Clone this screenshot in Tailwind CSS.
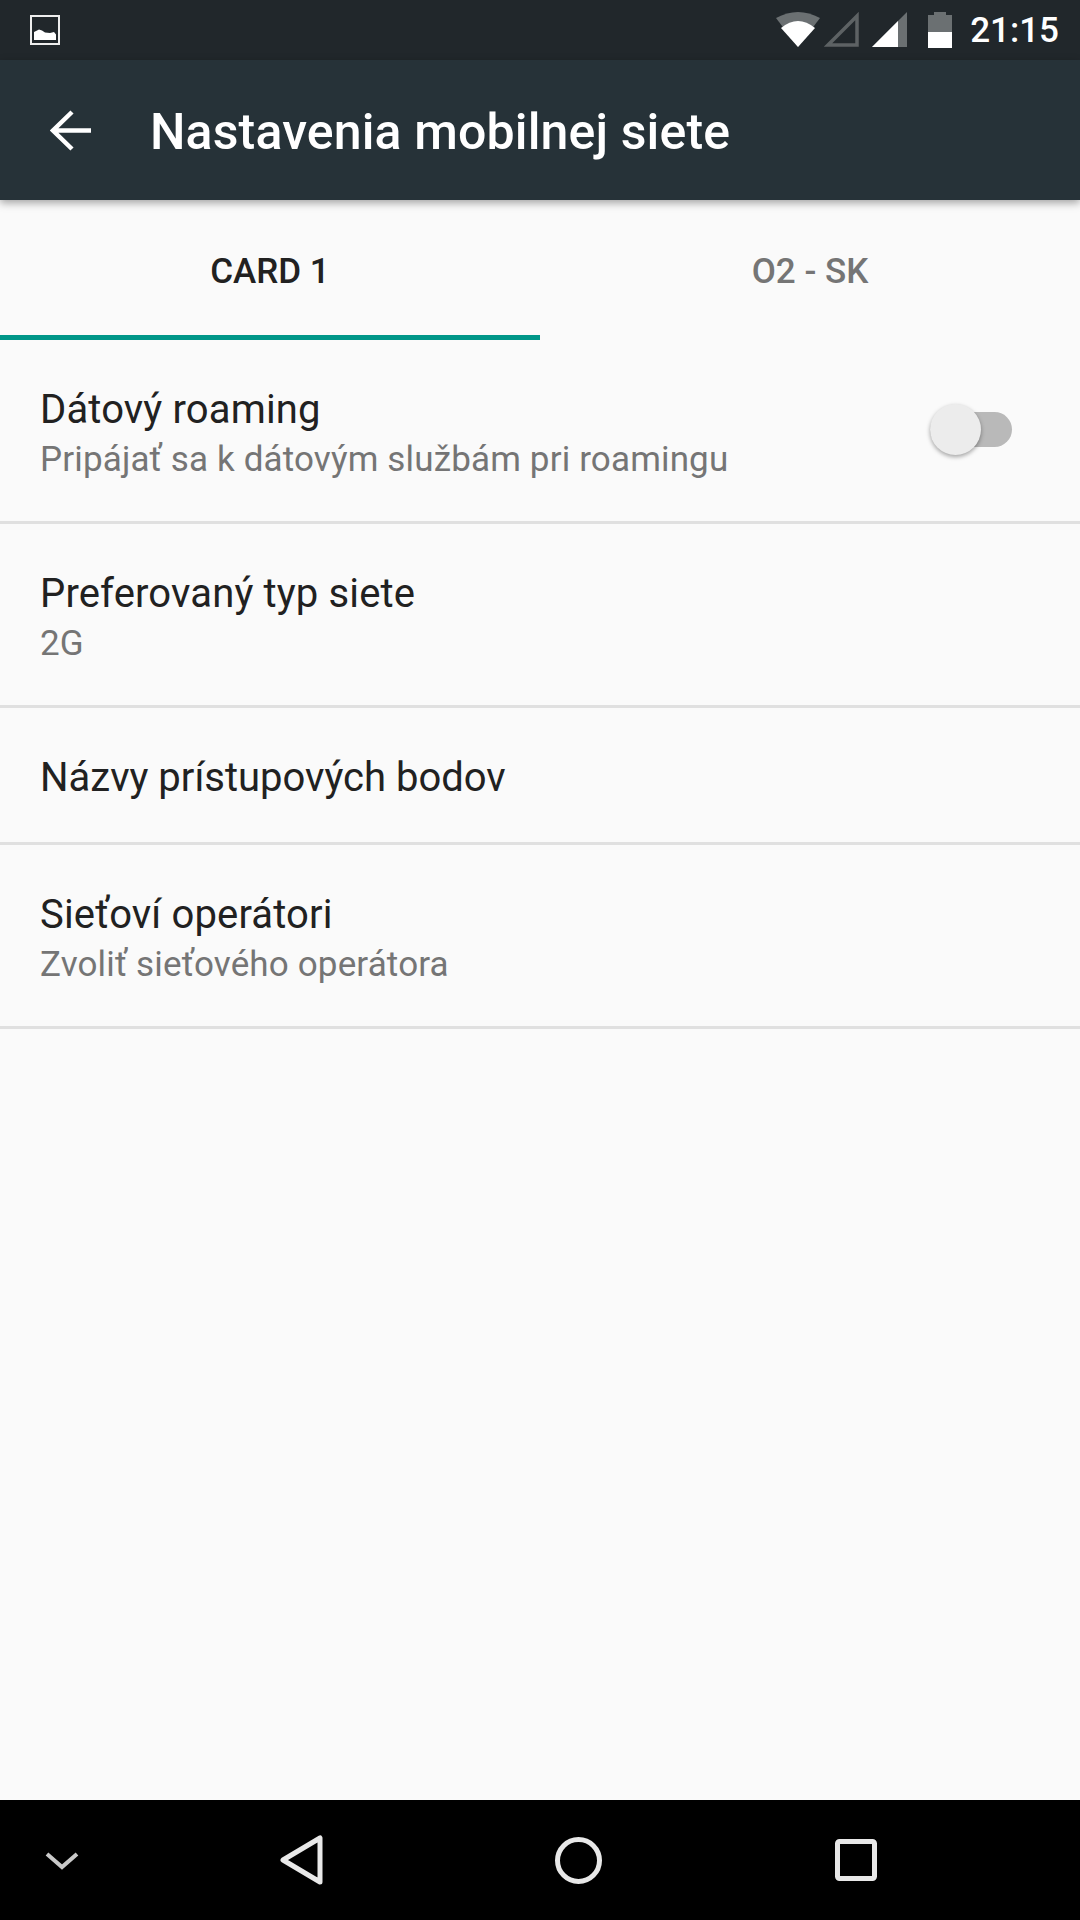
<!DOCTYPE html>
<html lang="sk">
<head>
    <meta charset="UTF-8" />
    <meta name="viewport" content="width=device-width, initial-scale=1.0" />
    <title>Nastavenia mobilnej siete</title>
    <script src="https://cdn.jsdelivr.net/npm/@tailwindcss/browser@4"></script>
</head>
<body class="bg-[#fafafa] font-[Roboto,sans-serif]">
    <div class="w-[1080px] h-[1920px] flex flex-col overflow-hidden">

        <!-- status bar -->
        <div class="h-[60px] bg-[#21272b] flex items-center pl-[30px] pr-[21px] text-white">
            <svg width="30" height="30" viewBox="0 0 30 30">
                <rect x="1" y="1" width="28" height="28" fill="none" stroke="#eeeeee" stroke-width="2" />
                <path d="M4 25V17L9 14.500L12 15.500L15 17.500L20 18L24 17L26 19.500V25Z" fill="#ffffff" />
            </svg>
            <div class="ml-auto flex items-center">
                <svg width="44" height="36" viewBox="0 0 44 36">
                    <path d="M0 6Q22 -6 44 6L22 35Z" fill="#6b7072" />
                    <path d="M5 16Q22 2 39 16L22 35Z" fill="#ffffff" />
                </svg>
                <svg class="ml-[4px]" width="36" height="36" viewBox="0 0 36 36">
                    <path d="M33 4V33H4Z" fill="none" stroke="#5d6264" stroke-width="3.500" />
                </svg>
                <svg class="ml-[12px]" width="36" height="36" viewBox="0 0 36 36">
                    <path d="M35 0V35H0Z" fill="#6b7072" />
                    <path d="M26 9V35H0Z" fill="#ffffff" />
                </svg>
                <svg class="ml-[20px]" width="24" height="36" viewBox="0 0 24 36">
                    <path d="M0 3H6V0H18V3H24V36H0Z" fill="#6b7072" />
                    <rect x="0" y="20" width="24" height="16" fill="#ffffff" />
                </svg>
                <span class="ml-[18px] pt-[2px] text-[35px] leading-[60px] font-medium">21:15</span>
            </div>
        </div>

        <!-- app bar -->
        <div class="relative z-10 h-[140px] bg-[#263238] flex items-center pt-[4px] shadow-[0_3px_8px_rgba(0,0,0,0.35)]">
            <svg class="ml-[50px] mt-[-4px]" width="41" height="41" viewBox="0 0 41 41">
                <path d="M41 20.500H3M22 2L3 20.500L22 39" fill="none" stroke="#ffffff" stroke-width="4.500" />
            </svg>
            <h1 class="ml-[59px] text-[50px] font-medium tracking-[0.15px] text-white">Nastavenia mobilnej siete</h1>
        </div>

        <!-- tabs -->
        <div class="h-[140px] grid grid-cols-2 text-[35px] font-medium">
            <div class="flex items-center justify-center pt-[10px] border-b-[5px] border-[#009688] text-[#212121]">CARD 1</div>
            <div class="flex items-center justify-center pt-[5px] text-[#757575]">O2 - SK</div>
        </div>

        <!-- settings list -->
        <div class="flex flex-col tracking-[0.15px]">
            <div class="h-[184px] flex items-center justify-between pl-[40px] pr-[68px] pt-[8px] border-b-[3px] border-[#e0e0e0]">
                <div>
                    <div class="text-[40px] leading-[50px] text-[#212121]">Dátový roaming</div>
                    <div class="text-[35px] leading-[50px] text-[#757575]">Pripájať sa k dátovým službám pri roamingu</div>
                </div>
                <div class="relative w-[82px] h-[35px] rounded-full bg-[#b9b9b9] mt-[-11px]">
                    <div class="absolute left-0 top-[-8px] size-[51px] rounded-full bg-[#ececec] shadow-[0_2px_4px_rgba(0,0,0,0.35)]"></div>
                </div>
            </div>
            <div class="h-[184px] flex flex-col justify-center pl-[40px] pt-[8px] border-b-[3px] border-[#e0e0e0]">
                <div class="text-[40px] leading-[50px] text-[#212121]">Preferovaný typ siete</div>
                <div class="text-[35px] leading-[50px] text-[#757575]">2G</div>
            </div>
            <div class="h-[137px] flex items-center pl-[40px] pt-[6px] border-b-[3px] border-[#e0e0e0]">
                <div class="text-[40px] leading-[50px] tracking-normal text-[#212121]">Názvy prístupových bodov</div>
            </div>
            <div class="h-[184px] flex flex-col justify-center pl-[40px] pt-[8px] border-b-[3px] border-[#e0e0e0]">
                <div class="text-[40px] leading-[50px] text-[#212121]">Sieťoví operátori</div>
                <div class="text-[35px] leading-[50px] text-[#757575]">Zvoliť sieťového operátora</div>
            </div>
        </div>

        <!-- navigation bar -->
        <div class="mt-auto h-[120px] bg-black relative">
            <svg class="absolute left-[45px] top-[50px]" width="34" height="22" viewBox="0 0 34 22">
                <path d="M2 4L17 17L32 4" fill="none" stroke="#c9c9c9" stroke-width="4" />
            </svg>
            <svg class="absolute left-[280px] top-[35px]" width="44" height="50" viewBox="0 0 44 50">
                <path d="M40 3V47L3 25Z" fill="none" stroke="#e8e8e8" stroke-width="5" stroke-linejoin="round" />
            </svg>
            <svg class="absolute left-[555px] top-[37px]" width="47" height="47" viewBox="0 0 47 47">
                <circle cx="23.500" cy="23.500" r="21" fill="none" stroke="#e8e8e8" stroke-width="5" />
            </svg>
            <svg class="absolute left-[835px] top-[39px]" width="42" height="42" viewBox="0 0 42 42">
                <rect x="2.500" y="2.500" width="37" height="37" rx="2" fill="none" stroke="#e8e8e8" stroke-width="5" />
            </svg>
        </div>
    </div>
</body>
</html>
